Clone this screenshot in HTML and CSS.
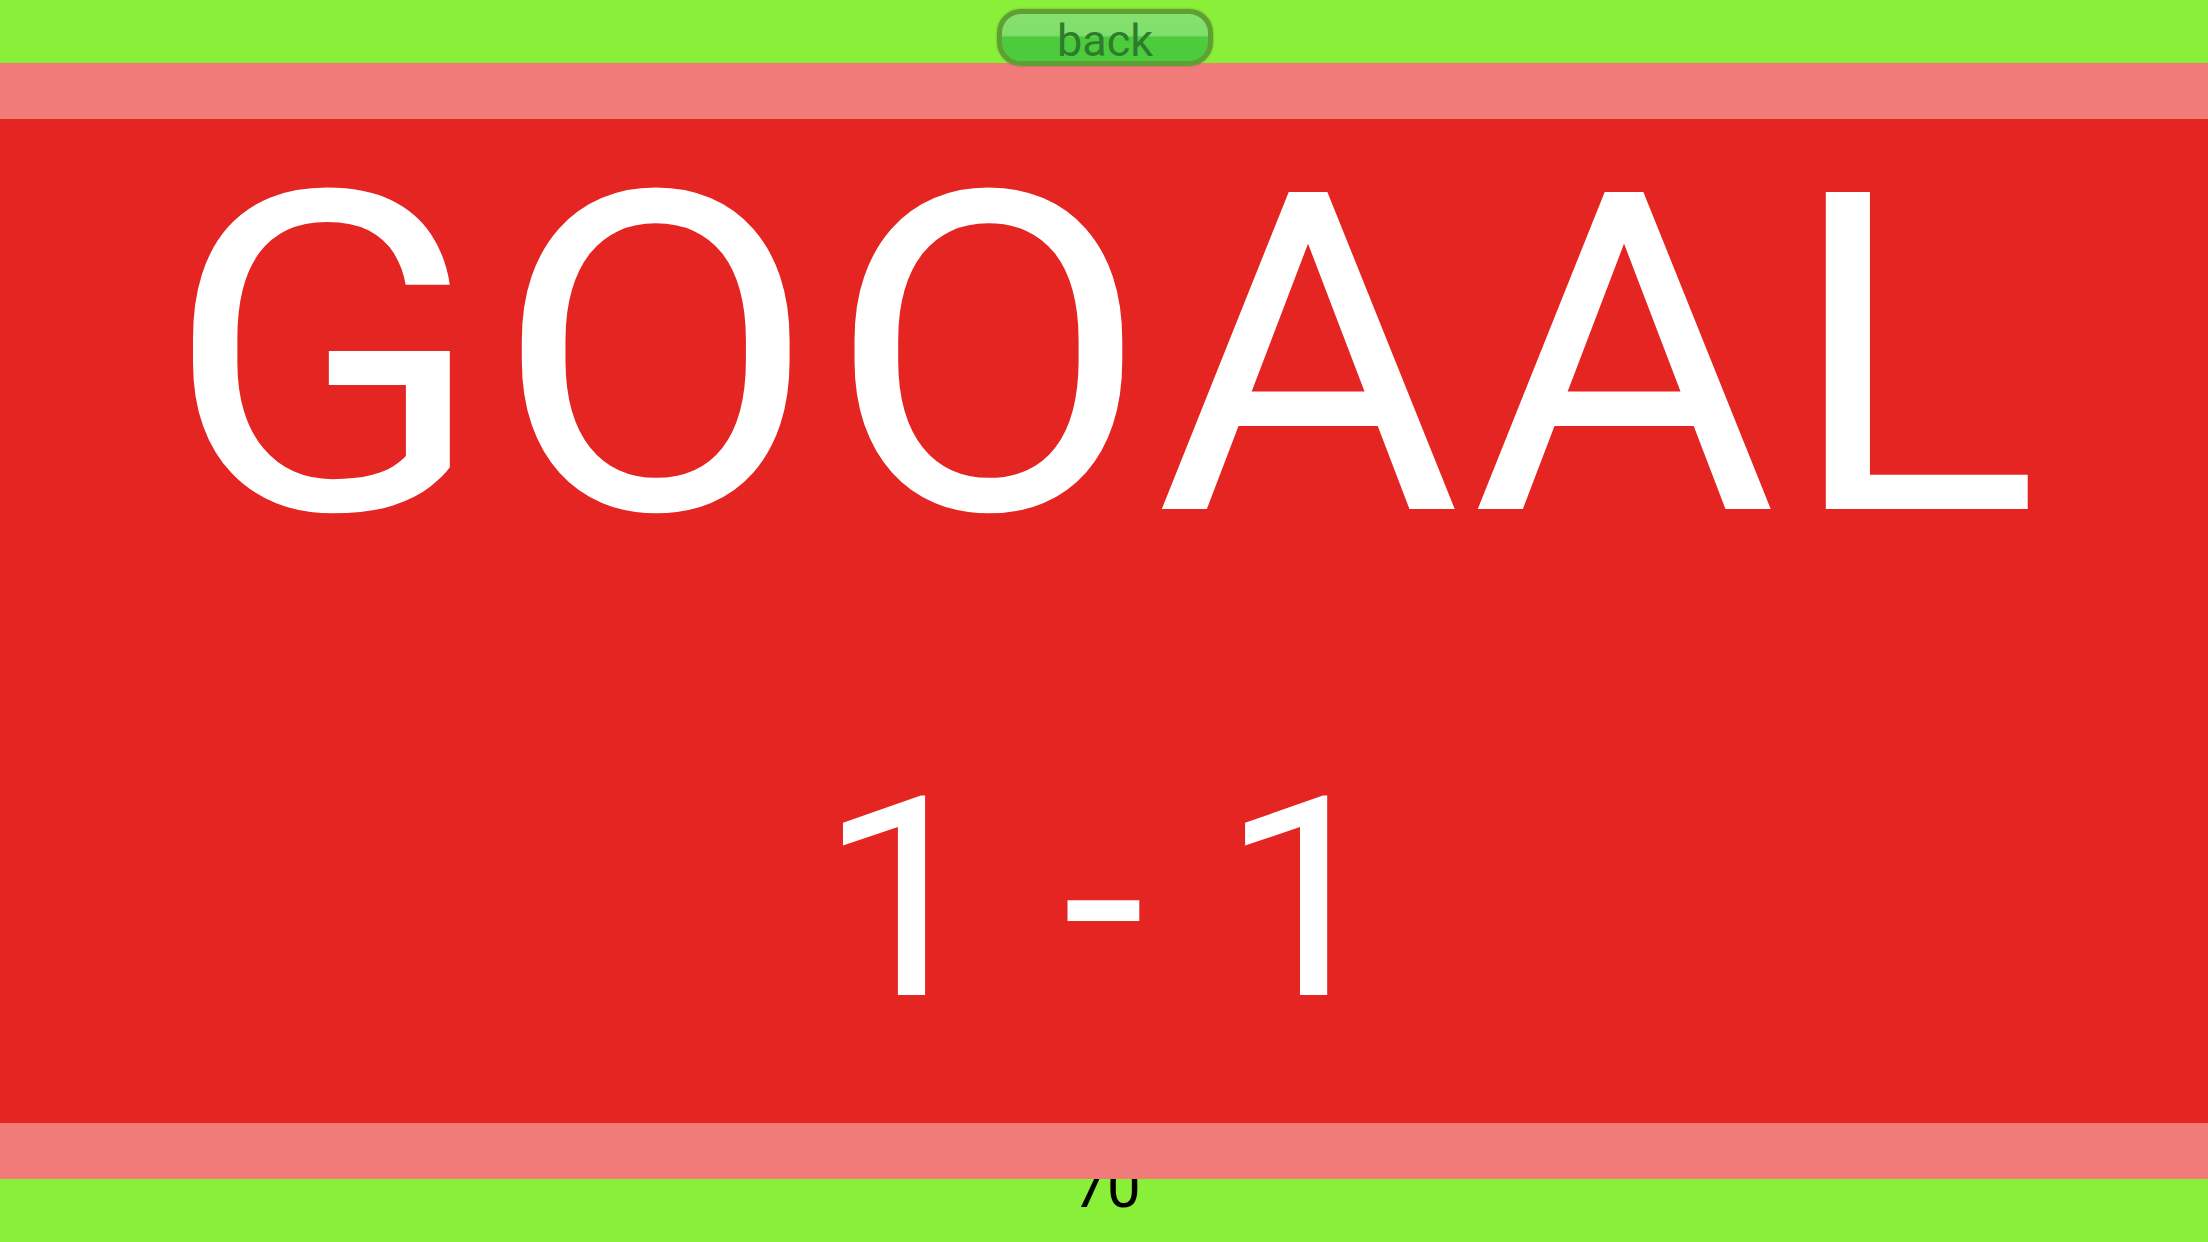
FILE: index.html
```html
<!DOCTYPE html>
<html>
<head>
<meta charset="utf-8">
<link rel="stylesheet" href="styles.css">
</head>
<body>
<div class="app">
  <header class="topbar">
    <button class="back-btn">back</button>
  </header>
  <main class="goal-screen">
    <div class="band"></div>
    <div class="content">
      <div class="goal-text"><span class="stretch">GOOAAL</span></div>
      <div class="score"><span class="stretch">1 - 1</span></div>
    </div>
    <div class="band band-bottom"></div>
  </main>
  <footer class="bottombar">
    <span class="minute">70</span>
  </footer>
</div>
</body>
</html>
```

FILE: styles.css
```css
html, body {
  margin: 0;
  padding: 0;
}
body {
  width: 2208px;
  height: 1242px;
  overflow: hidden;
  font-family: Roboto, "Liberation Sans", sans-serif;
  background: #89ef38;
}
.app {
  display: flex;
  flex-direction: column;
  height: 1242px;
}
.topbar {
  height: 63px;
  background: #89ef38;
  display: flex;
  justify-content: center;
  align-items: flex-start;
  position: relative;
  z-index: 3;
}
.back-btn {
  margin-top: 9px;
  margin-left: 2px;
  width: 216px;
  height: 57px;
  box-sizing: border-box;
  border: 5px solid #5f9f34;
  border-radius: 24px;
  background: linear-gradient(to bottom, #86e06e 0%, #80df6c 45%, #4ccc3c 50%, #4ccc3c 100%);
  color: #2e7d2c;
  font-family: Roboto, "Liberation Sans", sans-serif;
  font-size: 45px;
  line-height: 44px;
  padding: 5px 0 0 0;
  box-shadow: 0 0 2px rgba(60,110,30,0.6);
}
.goal-screen {
  height: 1116px;
  background: #e52521;
  display: flex;
  flex-direction: column;
}
.band {
  height: 56px;
  background: #f17b78;
  flex: none;
}
.band-bottom {
  position: relative;
  z-index: 2;
}
.content {
  flex: 1;
  display: flex;
  flex-direction: column;
  align-items: center;
}
.goal-text {
  margin-top: 15px;
  font-size: 446px;
  line-height: 446px;
  color: #ffffff;
  padding-left: 8px;
}
.goal-text .stretch {
  letter-spacing: 10px;
  transform: scaleX(1.05);
}
.score {
  margin-top: 180px;
  font-size: 279px;
  line-height: 279px;
  color: #ffffff;
}
.stretch {
  display: inline-block;
  transform: scaleX(1.08);
  white-space: pre;
}
.bottombar {
  height: 63px;
  background: #89ef38;
  display: flex;
  justify-content: center;
  align-items: flex-start;
}
.minute {
  margin-top: -22px;
  font-size: 60px;
  line-height: 60px;
  color: #000000;
  padding-left: 6px;
}
```
